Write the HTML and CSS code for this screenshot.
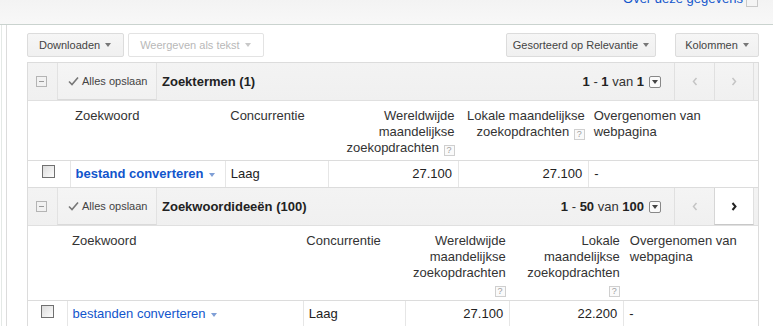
FILE: index.html
```html
<!DOCTYPE html>
<html lang="nl">
  <head>
    <meta charset="UTF-8" />
    <meta name="viewport" content="width=device-width, initial-scale=1.0" />
    <link rel="stylesheet" href="styles.css">
    <title>Zoekwoordplanner</title>
  </head>
  <body>
    <div class="topbar">
      <a class="about" href="#">Over deze gegevens <span class="ext"></span></a>
    </div>
    <div class="frame">
      <div class="main">
        <div class="toolbar">
          <div class="tools">
            <button class="btn">Downloaden <span class="caret"></span></button>
            <button class="btn btn-off">Weergeven als tekst <span class="caret"></span></button>
          </div>
          <div class="tools">
            <button class="btn btn-sort">Gesorteerd op Relevantie <span class="caret"></span></button>
            <button class="btn btn-cols">Kolommen <span class="caret"></span></button>
          </div>
        </div>

        <div class="panel">
          <div class="panel-head">
            <span class="collapse"></span>
            <button class="save">
              <svg width="11" height="10" viewBox="0 0 11 10"><path d="M1 5.5 L4 8.5 L10 1.5" fill="none" stroke="#777" stroke-width="1.6"/></svg>
              Alles opslaan
            </button>
            <h2 class="panel-title">Zoektermen (1)</h2>
            <div class="pager">
              <span><b>1</b> - <b>1</b> van <b>1</b></span>
              <span class="pick"></span>
            </div>
            <div class="nav">
              <button class="nav-btn">
                <svg width="6" height="9" viewBox="0 0 6 9"><path d="M4.5 1 L1.5 4.5 L4.5 8" fill="none" stroke="#c4c4c4" stroke-width="1.5"/></svg>
              </button>
              <button class="nav-btn">
                <svg width="6" height="9" viewBox="0 0 6 9"><path d="M1.5 1 L4.5 4.5 L1.5 8" fill="none" stroke="#c4c4c4" stroke-width="1.5"/></svg>
              </button>
            </div>
          </div>
          <table class="grid grid-terms">
            <colgroup>
              <col style="width: 42px">
              <col style="width: 155px">
              <col style="width: 103px">
              <col style="width: 130px">
              <col style="width: 130px">
              <col style="width: 169px">
            </colgroup>
            <thead>
              <tr>
                <th></th>
                <th>Zoekwoord</th>
                <th>Concurrentie</th>
                <th class="num">Wereldwijde maandelijkse zoekopdrachten <span class="help">?</span></th>
                <th class="num">Lokale maandelijkse zoekopdrachten <span class="help">?</span></th>
                <th>Overgenomen van webpagina</th>
              </tr>
            </thead>
            <tbody>
              <tr>
                <td class="cb"><span class="check"></span></td>
                <td class="kw"><a class="term bold" href="#">bestand converteren</a> <span class="drop"></span></td>
                <td class="line">Laag</td>
                <td class="num line">27.100</td>
                <td class="num line">27.100</td>
                <td class="line">-</td>
              </tr>
            </tbody>
          </table>
        </div>

        <div class="panel">
          <div class="panel-head">
            <span class="collapse"></span>
            <button class="save">
              <svg width="11" height="10" viewBox="0 0 11 10"><path d="M1 5.5 L4 8.5 L10 1.5" fill="none" stroke="#777" stroke-width="1.6"/></svg>
              Alles opslaan
            </button>
            <h2 class="panel-title">Zoekwoordideeën (100)</h2>
            <div class="pager">
              <span><b>1</b> - <b>50</b> van <b>100</b></span>
              <span class="pick"></span>
            </div>
            <div class="nav">
              <button class="nav-btn">
                <svg width="6" height="9" viewBox="0 0 6 9"><path d="M4.5 1 L1.5 4.5 L4.5 8" fill="none" stroke="#c4c4c4" stroke-width="1.5"/></svg>
              </button>
              <button class="nav-btn nav-on">
                <svg width="6" height="9" viewBox="0 0 6 9"><path d="M1.5 1 L4.5 4.5 L1.5 8" fill="none" stroke="#222" stroke-width="2"/></svg>
              </button>
            </div>
          </div>
          <table class="grid grid-ideas">
            <colgroup>
              <col style="width: 39px">
              <col style="width: 236px">
              <col style="width: 102px">
              <col style="width: 104px">
              <col style="width: 114px">
              <col style="width: 134px">
            </colgroup>
            <thead>
              <tr>
                <th></th>
                <th>Zoekwoord</th>
                <th>Concurrentie</th>
                <th class="num">Wereldwijde maandelijkse zoekopdrachten <span class="help">?</span></th>
                <th class="num">Lokale maandelijkse zoekopdrachten <span class="help">?</span></th>
                <th>Overgenomen van webpagina</th>
              </tr>
            </thead>
            <tbody>
              <tr>
                <td class="cb"><span class="check"></span></td>
                <td class="kw"><a class="term" href="#">bestanden converteren</a> <span class="drop"></span></td>
                <td class="line">Laag</td>
                <td class="num line">27.100</td>
                <td class="num line">22.200</td>
                <td class="line">-</td>
              </tr>
            </tbody>
          </table>
        </div>
      </div>
    </div>
  </body>
</html>
```

FILE: styles.css
```css
*,
*::after,
*::before {
  box-sizing: border-box;
}

body {
  margin: 0;
  font-family: "Liberation Sans", Arial, sans-serif;
  font-size: 13px;
  color: #222;
  background: #fff;
  overflow: hidden;
}

.topbar {
  height: 25px;
  display: flex;
  justify-content: flex-end;
  align-items: flex-start;
  padding-right: 15px;
  background: linear-gradient(#f3f3f3, #f8f8f8);
  border-bottom: 1px solid #cad3cf;
}

.about {
  margin-top: -9px;
  height: 16px;
  line-height: 16px;
  color: #1155cc;
  text-decoration: none;
  display: flex;
  align-items: center;
  gap: 3px;
}

.ext {
  width: 12px;
  height: 11px;
  margin-top: 4px;
  border: 1px solid #c8c8c8;
  background: #f4f4f4;
}

.frame {
  margin-left: 1px;
  border-left: 1px solid #e4e9e6;
  height: 301px;
}

.main {
  margin-left: 4px;
  border-left: 1px solid #dcdcdc;
  height: 100%;
  padding: 8px 14px 0 20px;
}

/* toolbar */

.toolbar {
  display: flex;
  justify-content: space-between;
  margin-bottom: 5px;
}

.tools {
  display: flex;
  gap: 4px;
}

.btn {
  height: 24px;
  display: inline-flex;
  align-items: center;
  gap: 5px;
  padding: 0 12px 0 11px;
  font-family: inherit;
  font-size: 11px;
  color: #444;
  white-space: nowrap;
  border: 1px solid #dcdcdc;
  border-radius: 2px;
  background: linear-gradient(#f6f6f6, #f0f0f0);
}

.btn-off {
  color: #b8b8b8;
  background: #fff;
  border-color: #e3e3e3;
}

.btn-off .caret {
  border-top-color: #c8c8c8;
}

.btn-sort {
  width: 150px;
  padding: 0;
  justify-content: center;
}

.btn-cols {
  margin-left: 15px;
  width: 84px;
  padding: 0;
  justify-content: center;
}

.caret {
  width: 0;
  height: 0;
  border-top: 4px solid #777;
  border-left: 3.5px solid transparent;
  border-right: 3.5px solid transparent;
}

/* panels */

.panel {
  border: 1px solid #dcdcdc;
}

.panel + .panel {
  border-top: none;
}

.panel-head {
  height: 38px;
  display: flex;
  align-items: center;
  background: linear-gradient(#f3f3f3, #f0f0f0);
  border-bottom: 1px solid #e0e0e0;
}

.collapse {
  width: 11px;
  height: 11px;
  margin: 0 10px 0 8px;
  border: 1px solid #b4b4b4;
  display: flex;
  align-items: center;
  justify-content: center;
}

.collapse::before {
  content: "";
  width: 5px;
  height: 1px;
  background: #999;
}

.save {
  align-self: stretch;
  width: 100px;
  display: flex;
  align-items: center;
  gap: 3px;
  padding: 0 0 0 10px;
  font-family: inherit;
  font-size: 11px;
  color: #444;
  border: none;
  border-left: 1px solid #e2e2e2;
  border-right: 1px solid #e2e2e2;
  border-bottom: 1px solid #dadada;
  background: linear-gradient(#f5f5f5, #f1f1f1);
}

.panel-title {
  margin: 0 0 0 5px;
  font-size: 13px;
  font-weight: bold;
  color: #222;
}

.pager {
  margin-left: auto;
  display: flex;
  align-items: center;
  gap: 5px;
  color: #333;
}

.pager b {
  color: #222;
}

.pick {
  width: 12px;
  height: 12px;
  border: 1px solid #888;
  border-radius: 2px;
  background: #fafafa;
  display: flex;
  align-items: center;
  justify-content: center;
}

.pick::before {
  content: "";
  border-top: 4px solid #444;
  border-left: 3px solid transparent;
  border-right: 3px solid transparent;
}

.nav {
  align-self: stretch;
  display: flex;
  margin: 0 4px 0 13px;
}

.nav-btn {
  width: 40px;
  border: none;
  border-left: 1px solid #e0e0e0;
  background: linear-gradient(#f4f4f4, #f0f0f0);
  display: flex;
  align-items: center;
  justify-content: center;
  padding: 0;
}

.nav-btn:last-child {
  border-right: 1px solid #e0e0e0;
}

.nav-on {
  background: #fff;
  border-left-color: #d6d6d6;
  border-right-color: #d6d6d6;
  border-bottom: 1px solid #c8c8c8;
}

/* tables */

.grid {
  width: 100%;
  border-collapse: collapse;
  table-layout: fixed;
}

.grid th {
  text-align: left;
  vertical-align: top;
  font-weight: normal;
  color: #333;
  line-height: 16px;
  padding: 7px 4px 4px 5px;
}

.grid-ideas th {
  padding-bottom: 3px;
}

.grid-ideas th:nth-child(3) {
  padding-left: 3px;
}

.grid-ideas th:nth-child(4) {
  padding-left: 2px;
}

.grid-ideas th:nth-child(6) {
  padding-left: 6px;
}

.grid td {
  border-top: 1px solid #dcdcdc;
  line-height: 16px;
  padding: 5px 6px 5px 5px;
  white-space: nowrap;
}

.grid .num {
  text-align: right;
}

.grid th.num {
  padding-right: 4px;
}

.grid td.line {
  border-left: 1px solid #e6e6e6;
}

.grid-ideas td.line:first-of-type {
  padding-left: 4px;
}

.help {
  display: inline-block;
  width: 11px;
  height: 11px;
  margin-left: 1px;
  border: 1px solid #cfcfcf;
  font-size: 9px;
  line-height: 9px;
  text-align: center;
  color: #a0a0a0;
  vertical-align: -1px;
  background: #fafafa;
}

.cb {
  text-align: center;
}

.grid td.cb {
  padding: 4px 0 0 0;
  vertical-align: top;
}

.check {
  display: inline-block;
  width: 13px;
  height: 13px;
  border: 1px solid #707070;
  background: linear-gradient(135deg, #dcdcdc, #fdfdfd);
}

.grid td.kw {
  border-left: 1px solid #e6e6e6;
}

.term {
  color: #1155cc;
  text-decoration: none;
}

.term.bold {
  font-weight: bold;
}

.drop {
  display: inline-block;
  margin-left: 2px;
  vertical-align: middle;
  border-top: 4px solid #7f9fd6;
  border-left: 3.5px solid transparent;
  border-right: 3.5px solid transparent;
}
```
